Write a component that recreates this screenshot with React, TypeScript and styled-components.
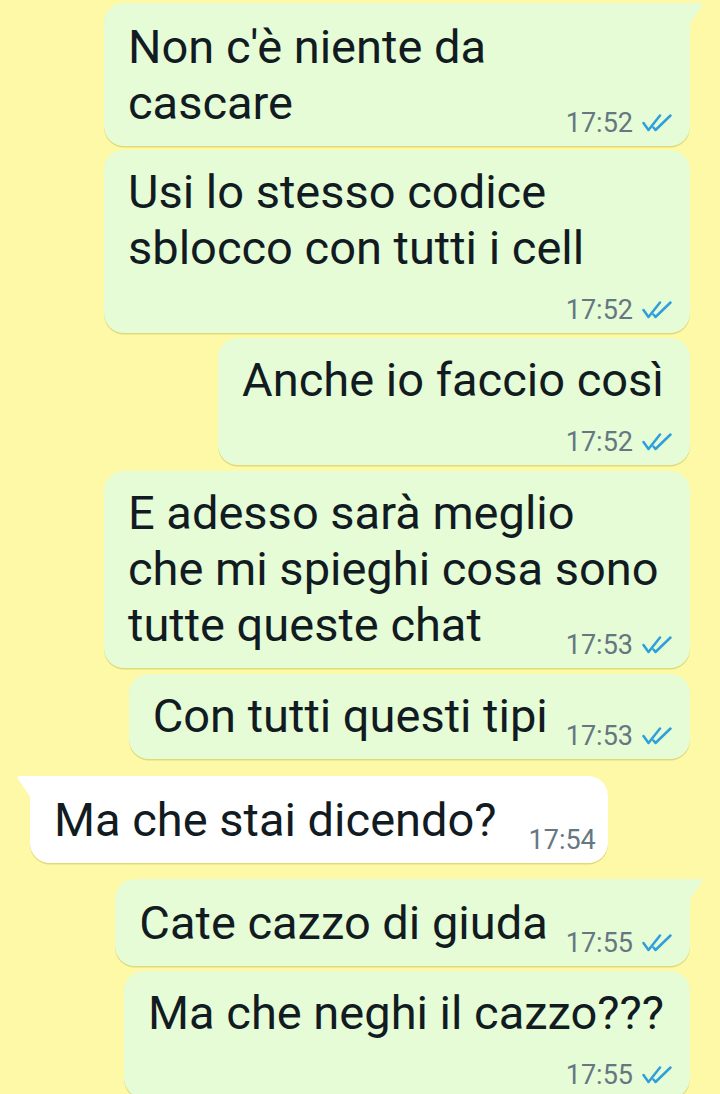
import * as React from 'react';
import styled, { createGlobalStyle, css } from 'styled-components';

const GlobalStyle = createGlobalStyle`
    html, body {
        margin: 0;
        padding: 0;
        background-color: #fef9a7;
    }
    body {
        font-family: Roboto, "Noto Sans", "Liberation Sans", sans-serif;
        overflow: hidden;
    }
`;

const Chat = styled.div`
    display: flex;
    flex-direction: column;
    align-items: stretch;
    width: 720px;
    height: 1094px;
    box-sizing: border-box;
    padding: 3px 30px 0 30px;
    background-color: #fef9a7;
    overflow: hidden;
`;

const Row = styled.div<{ $out: boolean; $gap: number }>`
    display: flex;
    justify-content: ${p => (p.$out ? 'flex-end' : 'flex-start')};
    margin-top: ${p => p.$gap}px;
`;

const tailOut = css`
    border-top-right-radius: 0;
    &::after {
        content: '';
        position: absolute;
        top: 0;
        right: -13px;
        width: 14px;
        height: 22px;
        background: inherit;
        clip-path: polygon(0 0, 88% 0, 100% 6%, 0 100%);
    }
`;

const tailIn = css`
    border-top-left-radius: 0;
    &::after {
        content: '';
        position: absolute;
        top: 0;
        left: -13px;
        width: 14px;
        height: 22px;
        background: inherit;
        clip-path: polygon(12% 0, 100% 0, 100% 100%, 0 6%);
    }
`;

const Bubble = styled.div<{ $out: boolean; $tail: boolean; $full: boolean }>`
    position: relative;
    display: flex;
    flex-direction: column;
    box-sizing: border-box;
    max-width: 586px;
    width: ${p => (p.$full ? '586px' : 'auto')};
    padding: ${p => (p.$tail ? 16 : 14)}px ${p => (p.$out ? 18 : 12)}px 15px 24px;
    border-radius: 20px;
    background-color: ${p => (p.$out ? '#e5fcd6' : '#ffffff')};
    box-shadow: 0 1.5px 0.5px rgba(170, 160, 40, 0.35);
    color: #111b21;
    ${p => (p.$tail ? (p.$out ? tailOut : tailIn) : '')}
`;

const Body = styled.div<{ $inline: boolean }>`
    display: flex;
    flex-direction: ${p => (p.$inline ? 'row' : 'column')};
    align-items: flex-end;
    justify-content: space-between;
`;

const Text = styled.div<{ $inline: boolean }>`
    align-self: ${p => (p.$inline ? 'auto' : 'flex-start')};
    flex: ${p => (p.$inline ? '1 1 auto' : '0 0 auto')};
    min-width: 0;
    font-size: 47px;
    line-height: 56px;
    white-space: nowrap;
    margin-right: ${p => (p.$inline ? 0 : 8)}px;
`;

const Meta = styled.div<{ $inline: boolean; $out: boolean }>`
    display: inline-flex;
    align-items: center;
    gap: 9px;
    flex-shrink: 0;
    margin-left: ${p => (p.$inline ? (p.$out ? 18 : 32) : 0)}px;
    margin-top: ${p => (p.$inline ? 0 : 22)}px;
    margin-bottom: -4px;
    line-height: 24px;
`;

const Time = styled.span`
    font-size: 27px;
    color: #667781;
`;

const Ticks = () => (
    <svg width="30" height="18" viewBox="0 0 30 18" fill="none">
        <path d="M1.5 9 L6.5 16 L18 1.5" stroke="#2f9fdb" strokeWidth="2.5" strokeLinecap="round" strokeLinejoin="round" />
        <path d="M11.5 13.5 L13.5 16 L28.5 1.5" stroke="#2f9fdb" strokeWidth="2.5" strokeLinecap="round" strokeLinejoin="round" />
    </svg>
);

type Msg = {
    out: boolean;
    tail?: boolean;
    full?: boolean;
    inline?: boolean;
    gap: number;
    lines: string[];
    time: string;
};

const messages: Msg[] = [
    { out: true, tail: true, full: true, inline: true, gap: 0, lines: ["Non c'è niente da", 'cascare'], time: '17:52' },
    { out: true, full: true, gap: 4, lines: ['Usi lo stesso codice', 'sblocco con tutti i cell'], time: '17:52' },
    { out: true, gap: 5, lines: ['Anche io faccio così'], time: '17:52' },
    { out: true, full: true, inline: true, gap: 6, lines: ['E adesso sarà meglio', 'che mi spieghi cosa sono', 'tutte queste chat'], time: '17:53' },
    { out: true, inline: true, gap: 6, lines: ['Con tutti questi tipi'], time: '17:53' },
    { out: false, tail: true, inline: true, gap: 17, lines: ['Ma che stai dicendo?'], time: '17:54' },
    { out: true, tail: true, inline: true, gap: 16, lines: ['Cate cazzo di giuda'], time: '17:55' },
    { out: true, gap: 5, lines: ['Ma che neghi il cazzo???'], time: '17:55' },
];

const Message = ({ m }: { m: Msg }) => {
    const inline = !!m.inline;
    return (
        <Row $out={m.out} $gap={m.gap}>
            <Bubble $out={m.out} $tail={!!m.tail} $full={!!m.full}>
                <Body $inline={inline}>
                    <Text $inline={inline}>
                        {m.lines.map((l, i) => (
                            <div key={i}>{l}</div>
                        ))}
                    </Text>
                    <Meta $inline={inline} $out={m.out}>
                        <Time>{m.time}</Time>
                        {m.out && <Ticks />}
                    </Meta>
                </Body>
            </Bubble>
        </Row>
    );
};

export default function App() {
    return (
        <>
            <GlobalStyle />
            <Chat>
                {messages.map((m, i) => (
                    <Message key={i} m={m} />
                ))}
            </Chat>
        </>
    );
}
